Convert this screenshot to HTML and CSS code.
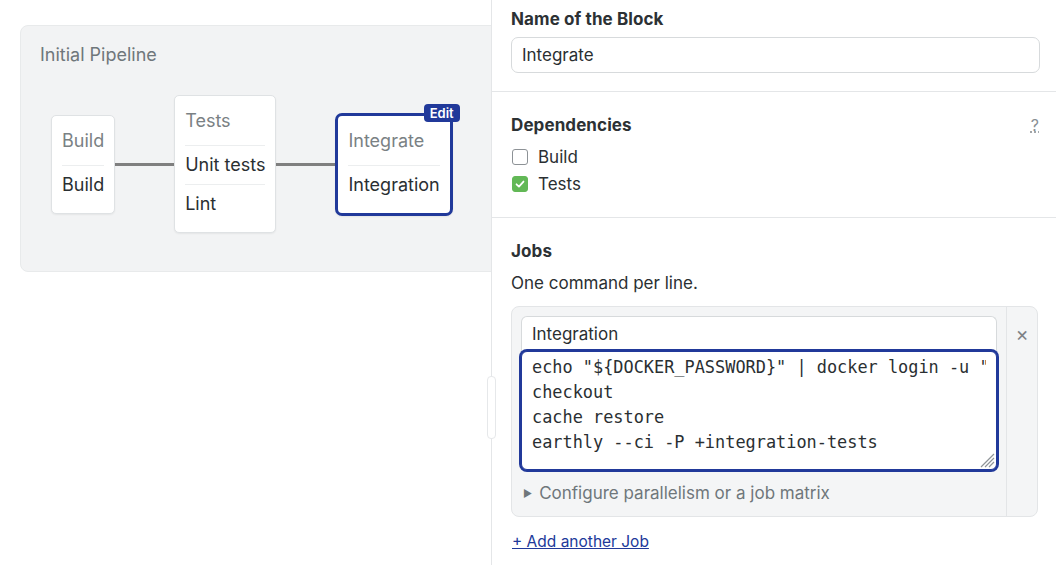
FILE: index.html
```html
<!DOCTYPE html>
<html lang="en">
<head>
<meta charset="utf-8">
<title>Pipeline editor</title>
<link rel="stylesheet" href="styles.css">
</head>
<body>
<div class="app">
  <section class="canvas">
    <div class="pipeline">
      <div class="pipeline-title">Initial Pipeline</div>
      <div class="flow">
        <div class="block">
          <div class="block-name">Build</div>
          <div class="job">Build</div>
        </div>
        <div class="link"></div>
        <div class="block">
          <div class="block-name">Tests</div>
          <div class="job">Unit tests</div>
          <div class="job">Lint</div>
        </div>
        <div class="link"></div>
        <div class="block selected">
          <span class="edit-badge">Edit</span>
          <div class="block-name">Integrate</div>
          <div class="job">Integration</div>
        </div>
      </div>
    </div>
  </section>

  <aside class="panel">
    <div class="splitter-handle"></div>

    <div class="section section-first">
      <div class="label">Name of the Block</div>
      <div class="text-input">Integrate</div>
    </div>

    <div class="section">
      <div class="label-row">
        <span class="label">Dependencies</span>
        <span class="help">?</span>
      </div>
      <div class="deps">
        <div class="check-row"><span class="checkbox"></span><span>Build</span></div>
        <div class="check-row"><span class="checkbox checked"><svg viewBox="0 0 16 16" width="16" height="16"><path d="M4 8.3 L6.8 11 L12 5.2" fill="none" stroke="#fff" stroke-width="2" stroke-linecap="round" stroke-linejoin="round"/></svg></span><span>Tests</span></div>
      </div>
    </div>

    <div class="section section-jobs">
      <div class="label">Jobs</div>
      <div class="hint">One command per line.</div>
      <div class="job-box">
        <div class="job-main">
          <div class="job-name">Integration</div>
          <div class="code">
            <div class="code-inner">echo "${DOCKER_PASSWORD}" | docker login -u "$DOCKER_USERNAME" --password-stdin
checkout
cache restore
earthly --ci -P +integration-tests</div>
            <svg class="grip" viewBox="0 0 16 16" width="16" height="16"><path d="M15 2 L2 15 M15 6 L6 15 M15 10 L10 15" stroke="#8f9498" stroke-width="1.2" fill="none"/></svg>
          </div>
          <div class="configure"><span class="tri">&#9654;</span>Configure parallelism or a job matrix</div>
        </div>
        <div class="job-side"><span class="close">&times;</span></div>
      </div>
      <a class="add-link" href="#">+ Add another Job</a>
    </div>
  </aside>
</div>
</body>
</html>
```

FILE: styles.css
```css
* { box-sizing: border-box; }
html, body { margin: 0; padding: 0; background: #fff; }
body {
  font-family: "Inter", "Liberation Sans", sans-serif;
  color: #2c3134;
  width: 1056px;
  height: 565px;
  overflow: hidden;
}
.app {
  display: flex;
  height: 565px;
}

/* left canvas */
.canvas {
  width: 491px;
  flex: none;
  overflow: hidden;
  padding: 25px 0 0 20px;
}
.pipeline {
  width: 520px;
  height: 247px;
  background: #f2f3f4;
  border: 1px solid #e8eaeb;
  border-radius: 8px;
  padding: 18px 0 0 19px;
}
.pipeline-title {
  font-size: 18px;
  line-height: 22px;
  color: #6f777b;
}
.flow {
  display: flex;
  align-items: center;
  margin-top: 29px;
  margin-left: 11px;
}
.block {
  position: relative;
  background: #fff;
  border: 1px solid #dfe2e4;
  border-radius: 5px;
  padding: 13px 10px 9px;
  box-shadow: 0 1px 2px rgba(0,0,0,0.06);
  font-size: 18px;
}
.block.selected {
  border: 3px solid #21399a;
  border-radius: 7px;
}
.block-name {
  line-height: 24px;
  color: #7a8184;
  padding-bottom: 12px;
  white-space: nowrap;
}
.job {
  line-height: 24px;
  border-top: 1px solid #eceeef;
  padding: 7px 0;
  color: #2a2f32;
  white-space: nowrap;
}
.link {
  width: 59px;
  height: 3px;
  background: #7f7f7f;
  flex: none;
}
.edit-badge {
  position: absolute;
  top: -12px;
  right: -10px;
  background: #21399a;
  color: #fff;
  font-size: 13px;
  font-weight: 600;
  line-height: 18px;
  padding: 0 6px;
  border-radius: 4px;
}

/* right panel */
.panel {
  position: relative;
  flex: 1;
  min-width: 0;
  border-left: 1px solid #e4e6e8;
}
.splitter-handle {
  position: absolute;
  left: -5px;
  top: 376px;
  width: 9px;
  height: 63px;
  background: #fff;
  border: 1px solid #e6e8ea;
  border-radius: 4px;
}
.section {
  padding: 22px 16px 20px 19px;
  border-bottom: 1px solid #e4e6e8;
}
.section-first {
  padding-top: 8px;
  padding-bottom: 18px;
}
.section-jobs {
  border-bottom: none;
}
.label {
  font-size: 17px;
  font-weight: 700;
  line-height: 22px;
  color: #2c3134;
  letter-spacing: 0.1px;
}
.label-row {
  display: flex;
  justify-content: space-between;
  align-items: center;
}
.help {
  font-size: 16px;
  color: #8a9094;
  text-decoration: underline;
  text-decoration-style: dotted;
  margin-right: 1px;
}
.text-input {
  margin-top: 7px;
  height: 36px;
  border: 1px solid #d7dadc;
  border-radius: 7px;
  padding: 0 10px;
  font-size: 17px;
  line-height: 34px;
  color: #2a2f32;
}
.deps {
  margin-top: 7px;
}
.check-row {
  display: flex;
  align-items: center;
  gap: 10px;
  height: 27px;
  font-size: 17px;
  color: #2a2f32;
}
.checkbox {
  width: 16px;
  height: 16px;
  margin-left: 1px;
  border: 1.5px solid #8d9296;
  border-radius: 3px;
  display: flex;
  align-items: center;
  justify-content: center;
  flex: none;
}
.checkbox.checked {
  background: #62b856;
  border-color: #62b856;
}
.checkbox svg { width: 14px; height: 14px; }
.hint {
  margin-top: 10px;
  font-size: 17px;
  line-height: 22px;
  color: #2a2f32;
}
.job-box {
  margin-top: 12px;
  margin-right: 2px;
  display: flex;
  background: #f4f5f6;
  border: 1px solid #e3e5e7;
  border-radius: 8px;
}
.job-main {
  flex: 1;
  padding: 9px 9px 12px 9px;
  min-width: 0;
}
.job-side {
  width: 31px;
  flex: none;
  border-left: 1px solid #e3e5e7;
  display: flex;
  justify-content: center;
  padding-top: 17px;
}
.close {
  font-size: 20px;
  line-height: 20px;
  color: #7d8286;
}
.job-name {
  height: 35px;
  background: #fff;
  border: 1px solid #d7dadc;
  border-bottom: none;
  border-radius: 6px 6px 0 0;
  padding: 0 10px;
  font-size: 17px;
  line-height: 35px;
  color: #2a2f32;
}
.code {
  position: relative;
  height: 119px;
  background: #fff;
  border: 1px solid #21399a;
  box-shadow: 0 0 0 2px #21399a;
  border-radius: 6px;
  padding: 3px 10px 0 10px;
}
.code-inner {
  font-family: "DejaVu Sans Mono", "Liberation Mono", monospace;
  font-size: 16.9px;
  line-height: 25px;
  white-space: pre;
  overflow: hidden;
  color: #2a2f32;
}
.grip {
  position: absolute;
  right: 1px;
  bottom: 1px;
}
.configure {
  margin-top: 12px;
  font-size: 17px;
  line-height: 22px;
  color: #6f777b;
  display: flex;
  align-items: center;
  padding-left: 2px;
}
.tri {
  font-size: 10px;
  margin-right: 7px;
  color: #6f777b;
}
.add-link {
  display: inline-block;
  margin-top: 14px;
  margin-left: 1px;
  font-size: 15.5px;
  line-height: 22px;
  color: #21399a;
  text-decoration: underline;
}
```
